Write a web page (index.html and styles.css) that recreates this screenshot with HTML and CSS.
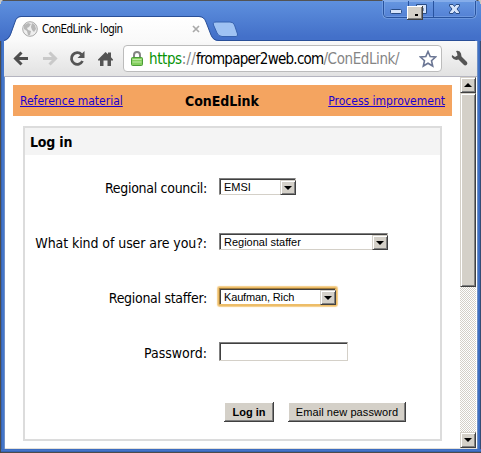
FILE: index.html
```html
<!DOCTYPE html>
<html lang="en">
<head>
<meta charset="utf-8">
<title>ConEdLink - login</title>
<link rel="stylesheet" href="styles.css">
</head>
<body>
<div class="window">
  <div class="titlebar">
    <svg class="frame" width="481" height="42" viewBox="0 0 481 42">
      <defs>
        <linearGradient id="tab" x1="0" y1="0" x2="0" y2="1"><stop offset="0" stop-color="#fff"/><stop offset="1" stop-color="#f9f9f9"/></linearGradient>
        <linearGradient id="ctl" x1="0" y1="0" x2="0" y2="1"><stop offset="0" stop-color="#6697e1"/><stop offset="1" stop-color="#5380d4"/></linearGradient>
      </defs>
      <path d="M0 0H3L1 2V4H0ZM481 0H478L480 2V4H481Z" fill="#c9c9c5"/>
      <path d="M4 42V41Q9 40 11 34L15 22Q16.500 17 21 17H199Q204 17 206 22L211 35Q213 41 219 41H475Q477 41 477 42Z" fill="url(#tab)"/>
      <path d="M4 40.500Q9 39 11 33L15 22Q16.500 16.500 21 16.500H199Q204 16.500 206 22L211 35Q213 40.500 219 40.500H475" fill="none" stroke="#294f98"/>
      <path d="M216 22H230Q233.500 22 234.500 25L237.500 34Q238 36.500 236 36.500H222Q218.500 36.500 217 33L213.500 25Q212.500 22 216 22Z" fill="#9fc2f3" stroke="#3762b0"/>
      <path d="M383.500 1V14Q383.500 17.500 387 17.500H472Q475.500 17.500 475.500 14V1Z" fill="url(#ctl)" stroke="#85adea" stroke-width="2"/>
      <path d="M383.500 1V14Q383.500 17.500 387 17.500H472Q475.500 17.500 475.500 14V1M408.500 1V17M433.500 1V17" fill="none" stroke="#28539f"/>
      <rect x="390.500" y="9.500" width="11" height="4" rx="1" fill="#d6e4fa" stroke="#294d87"/>
      <path d="M416.500 4.500H426.500V13.500H416.500Z" fill="#d6e4fa" stroke="#294d87"/><path d="M420 8h3v3h-3z" fill="#5685d7" stroke="#294d87"/>
      <path d="M449.500 4.500H453L454.500 6.500 456 4.500H459.500V6L457 9 459.500 12V13.500H456L454.500 11.500 453 13.500H449.500V12L452 9 449.500 6Z" fill="#d6e4fa" stroke="#294d87"/>
      <path d="M407 6H423V20H407Z" fill="#404040"/><path d="M407 6H422V19H407Z" fill="#fff"/><path d="M408 7H422V19H408Z" fill="#808080"/><path d="M408 7H421V18H408Z" fill="#d4d0c8"/><path d="M415 14h3v2h-3z" fill="#000"/>
      <circle cx="30" cy="29" r="7.300" fill="#eee" stroke="#aaa"/>
      <path d="M24 25L28 23 31 24 29 27 27 28 28 30 31 31 30 35 28 35 27 31 24 29ZM32 23L35 25 36 29 34 32 32 30 31 27Z" fill="#b7b7b7"/>
      <path d="M193 26L199 32M199 26L193 32" stroke="#aaa" stroke-width="1.700"/>
    </svg>
    <span class="tab-title">ConEdLink - login</span>
  </div>
  <div class="toolbar">
    <svg class="tools" width="118" height="35" viewBox="0 41 118 35">
      <g fill="none" stroke-linecap="butt">
        <path d="M28 58.500H16M21.500 52.500L15.500 58.500 21.500 64.500" stroke="#4e4e4e" stroke-width="3"/>
        <path d="M43 58.500H55M49.500 52.500L55.500 58.500 49.500 64.500" stroke="#c9c9c9" stroke-width="3"/>
        <path d="M81.500 54.500A5.800 5.800 0 1 0 82.500 61" stroke="#555" stroke-width="2.800"/>
      </g>
      <path d="M84.500 51V58H77.500Z" fill="#555"/>
      <path d="M98 59.500L105.500 52 108 54.300V52.500H111V57.300L113 59.500V60.500H111V66H107.500V60.500H103.500V66H100V60.500H98Z" fill="#555"/>
    </svg>
    <div class="address">
      <svg class="lock" width="12" height="17" viewBox="0 0 12 17"><path d="M3 8V5Q3 2 6 2T9 5V8" fill="none" stroke="#858585" stroke-width="2"/><rect x=".5" y="7.500" width="11" height="8" rx="1" fill="#84cf5e" stroke="#4b9d38"/><path d="M1.500 9.500H10.500M1.500 12H10.500" stroke="#bee9a7"/></svg>
      <span class="url"><span class="secure">https</span><span class="dim sep">://</span><span class="host">frompaper2web.com</span><span class="dim">/ConEdLink/</span></span>
      <svg class="star" width="18" height="18" viewBox="0 0 18 18"><path d="M9 1.500L11.200 6.500 16.500 7 12.500 10.700 13.700 16 9 13.200 4.300 16 5.500 10.700 1.500 7 6.800 6.500Z" fill="#fff" stroke="#6b7694" stroke-width="1.600"/></svg>
    </div>
    <svg class="wrench" width="18" height="17" viewBox="0 0 18 17"><path d="M5 1Q9 0 10 3.500L10.500 6.500 16 12Q17 14 15.500 15T12.500 14.500L7.500 9.500Q3 11 .8 7L1 5 4 7 6.500 5.500 6 3Z" fill="#555"/></svg>
  </div>
  <div class="viewport">
    <main class="page">
      <header class="banner"><a class="ref" href="#">Reference material</a><strong class="brand">ConEdLink</strong><a class="process" href="#">Process improvement</a></header>
      <section class="panel">
        <h1><span>Log in</span></h1>
        <div class="row"><span class="label l1">Regional council:</span><div class="select s1"><span>EMSI</span><i></i></div></div>
        <div class="row"><span class="label l2">What kind of user are you?:</span><div class="select s2"><span>Regional staffer</span><i></i></div></div>
        <div class="row"><span class="label l3">Regional staffer:</span><div class="select s3 focus"><span>Kaufman, Rich</span><i></i></div></div>
        <div class="row"><span class="label l4">Password:</span><input class="password" type="password" aria-label="Password"></div>
        <div class="actions"><button class="login"><span>Log in</span></button><button class="email"><span>Email new password</span></button></div>
      </section>
    </main>
    <div class="scrollbar"><div class="arrow up"></div><div class="thumb"></div><div class="track"></div><div class="arrow down"></div></div>
  </div>
  <div class="bottom-frame"></div>
</div>
</body>
</html>
```
FILE: styles.css
```css
* { box-sizing: border-box; }
body { margin: 0; overflow: hidden; background: #444; font-family: "DejaVu Sans Condensed", "DejaVu Sans", sans-serif; color: #000; }
span, a, strong { white-space: nowrap; }
.window { width: 481px; height: 453px; border: 1px solid #4c4c4c; border-width: 1px 0 1px 1px; background: linear-gradient(90deg, #2b559f 0, #4375c9 1px, #4375c9 3px, #9babc2 4px, #fff 5px, #fff 475px, #9babc2 476px, #4375c9 477px, #3765b8 479px, #333 480px); display: flex; flex-direction: column; border-radius: 2px; }
.titlebar { height: 41px; margin: -1px 0 0 -1px; padding: 20px 0 0 42px; background: linear-gradient(#5e90de, #4370c9 36px); position: relative; border-top: 1px solid #535353; flex: none; }
.frame { position: absolute; left: 0; top: -1px; }
.tab-title { position: relative; display: block; width: max-content; font-size: 11.500px; line-height: 17px; letter-spacing: -.55px; }
.toolbar { height: 36px; flex: none; margin: 0 4px 0 3px; padding-left: 1px; display: flex; align-items: flex-start; background: linear-gradient(#f9f9f9, #e2e2e2); border-bottom: 1px solid #b5b5c0; }
.tools { width: 118px; margin-left: -5px; flex: none; }
.address { width: 319px; height: 27px; margin: 4px 0 0 5px; padding: 0 4px 0 7px; border: 1px solid #bcbcbc; border-radius: 4px; background: #fff; display: flex; align-items: center; flex: none; }
.lock { flex: none; }
.url { margin-left: 6px; font: 15px/24px "DejaVu Sans Condensed", sans-serif; letter-spacing: -.4px; }
.secure { color: #079307; }
.dim { color: #858585; }
.sep { letter-spacing: .2px; }
.host { letter-spacing: -.75px; }
.star { margin-left: auto; flex: none; }
.wrench { margin: 9px 0 0 9px; flex: none; }
.viewport { height: 372px; flex: none; margin: 0 4px 0 4px; display: flex; background: #fff; border-bottom: 1px solid #e3e0da; }
.page { width: 455px; flex: none; padding: 8px 0 0 8px; }
.banner { width: 439px; height: 31px; padding: 0 7px; display: grid; grid-template-columns: 165px 1fr auto; align-items: center; background: #f4a460; font-size: 12px; }
.banner a { color: #1b00d0; text-decoration: underline; padding-top: 1px; }
.brand { font-size: 14px; letter-spacing: -.05px; }
.panel { width: 419px; height: 315px; margin: 10px 0 0 10px; border: 2px solid #dcdcdc; }
.panel h1 { height: 27px; margin: 0 0 14px; padding-left: 5px; background: #f4f4f4; font-size: 14px; line-height: 28px; letter-spacing: -.2px; }
.row { height: 35px; margin-bottom: 20px; display: flex; align-items: center; }
.label { width: 182px; font-size: 14px; line-height: 18px; flex: none; display: flex; justify-content: flex-end; padding-top: 3px; }
.l1 { letter-spacing: -.3px; }
.l2 { letter-spacing: -.08px; }
.l3 { letter-spacing: -.3px; }
.select, .password { margin-left: 12px; border: 1px solid; border-color: #808080 #d4d0c8 #d4d0c8 #808080; box-shadow: inset 1px 1px #404040; background: #fff; }
.select { height: 17px; display: flex; justify-content: space-between; padding: 1px 0 0 4px; font: 11px/15px "Liberation Sans", sans-serif; }
.select i { width: 16px; height: 15px; margin-right: -1px; border: 1px solid; border-color: #d4d0c8 #404040 #404040 #d4d0c8; box-shadow: inset 1px 1px #fff, inset -1px -1px #808080; background: #d4d0c8; display: grid; place-items: center; }
.select i::after, .arrow::after { content: ""; border: 4px solid transparent; border-top-color: #000; border-bottom: 0; }
.s1 { width: 77px; }
.s2 { width: 169px; }
.s3 { width: 117px; letter-spacing: -.15px; }
.focus { outline: 1.500px solid #f0c272; border-color: #9f7b3c #edbd68 #edbd68 #9f7b3c; box-shadow: inset 1px 1px #404040, 0 0 0 1px #edbd68, 0 0 1px 1.500px #f4cc86; outline: none; border-radius: 1px; }
.password { width: 129px; height: 19px; padding: 0; border-radius: 0; }
.actions { display: flex; gap: 14px; padding: 13px 0 0 199px; }
.actions button { height: 20px; padding: 0; background: #d4d0c8; border: 0; box-shadow: inset -1px -1px #404040, inset 1px 1px #fff, inset -2px -2px #808080; font: 11px/18px "Liberation Sans", sans-serif; color: #000; }
.actions .login { width: 50px; font-weight: bold; }
.email { width: 118px; }
.email span { letter-spacing: .08px; }
.scrollbar { width: 16px; height: 371px; display: flex; flex-direction: column; flex: none; }
.arrow, .thumb { background: #d4d0c8; border: 1px solid; border-color: #d4d0c8 #404040 #404040 #d4d0c8; box-shadow: inset 1px 1px #fff, inset -1px -1px #808080; flex: none; }
.arrow { height: 16px; display: grid; place-items: center; }
.up::after { transform: rotate(180deg); }
.thumb { height: 194px; }
.track { flex: 1; background: repeating-conic-gradient(#d4d0c8 0 25%, #fff 0 50%) 0 0 / 2px 2px; }
.bottom-frame { height: 3px; flex: none; background: linear-gradient(#3765b8, #4375c9 1px, #4375c9 2px, #2b559f); }
```
